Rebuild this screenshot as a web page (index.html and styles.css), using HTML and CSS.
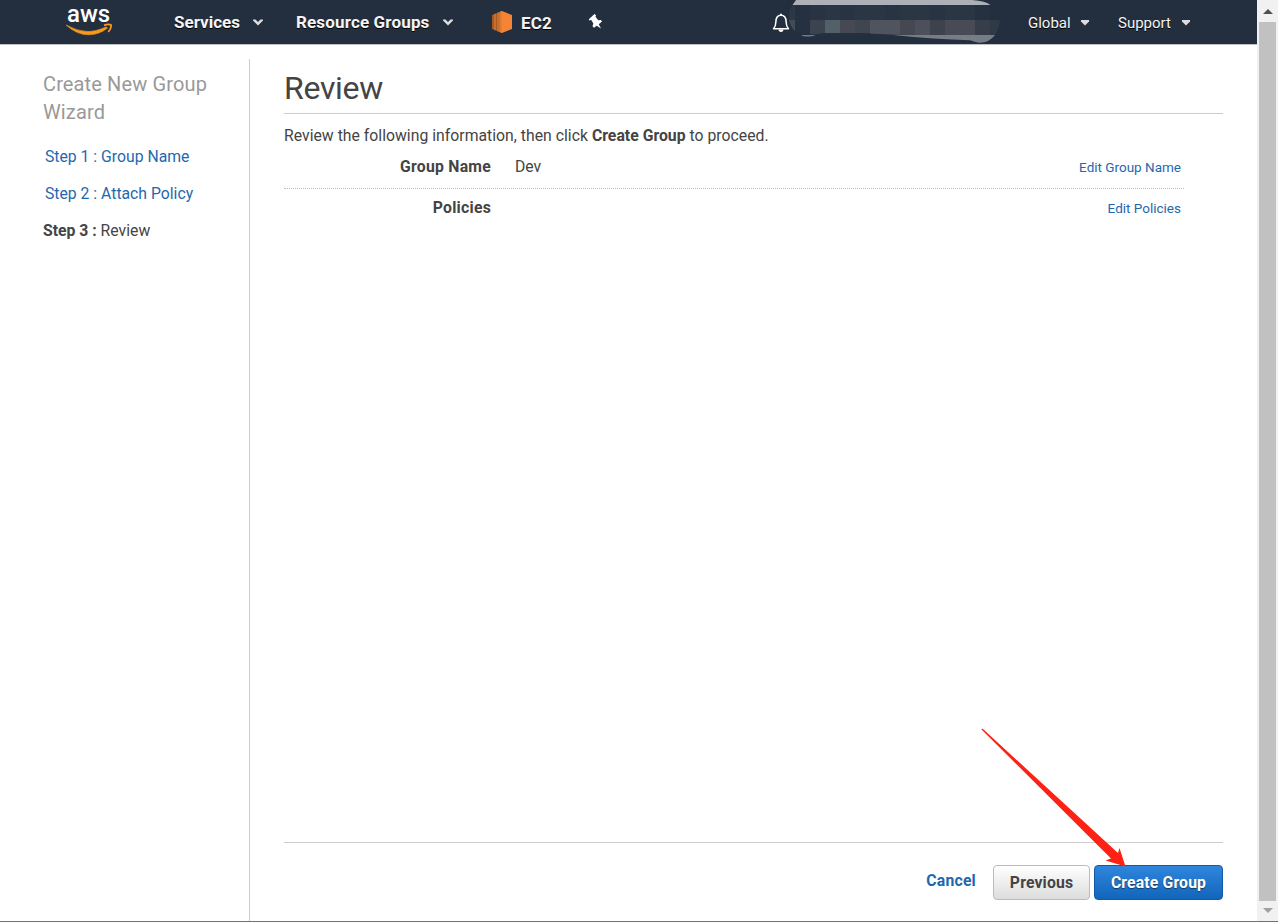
FILE: index.html
```html
<!DOCTYPE html>
<html lang="en">
<head>
<meta charset="utf-8">
<title>Create New Group Wizard</title>
<link rel="stylesheet" href="styles.css">
</head>
<body>
<div class="window">
  <div class="page">
    <header class="nav">
      <a class="logo"><span class="logo-text">aws</span>
        <svg class="smile" width="48" height="13" viewBox="0 0 48 13"><path d="M1 2Q12 12 24 11.800 35 11.300 42.500 5L41 4Q30 8.800 22 8.500 12 8 1 2Z" fill="#f79a1c" stroke="#f79a1c" stroke-width=".6" stroke-linejoin="round"/><path d="M39 2.300Q44 .6 46 2 46.600 5 43.300 9" fill="none" stroke="#f79a1c" stroke-width="1.800"/></svg>
      </a>
      <span class="nav-item services">Services</span>
      <svg class="chev" width="10" height="7" viewBox="0 0 10 7"><path d="M0 .5H2.500L5 3 7.500 .5H10V1.500L5 6.500 0 1.500Z" fill="#ddd"/></svg>
      <span class="nav-item groups">Resource Groups</span>
      <svg class="chev" width="10" height="7" viewBox="0 0 10 7"><path d="M0 .5H2.500L5 3 7.500 .5H10V1.500L5 6.500 0 1.500Z" fill="#ddd"/></svg>
      <svg class="cube" width="20" height="22" viewBox="0 0 20 22"><path d="M0 4 10 0V22L0 18Z" fill="#a65b27"/><path d="M2 3.200 4 2.400V19.600L2 18.800ZM5 2 7 1.200V20.800L5 20Z" fill="#c96f2d"/><path d="M7.500 1 10 0 20 4V18L10 22 7.500 21Z" fill="#f58534"/><path d="M9 1V21" stroke="#c96f2d" stroke-width=".7"/></svg>
      <span class="nav-item ec2">EC2</span>
      <svg class="pin" width="15" height="16" viewBox="0 0 15 16"><path d="M.8 5.200 6.500 0 8 1.200 7.500 2.800 10.300 6.300 13 6 14 7.500 10.800 10.200 13 14.500 8.700 11.700 6 13.800 4.500 12.200 5.300 9.500 3.300 6 1.500 6.500Z" fill="#fff"/></svg>
      <svg class="bell" width="18" height="20" viewBox="0 0 18 20"><path d="M1.500 15.800C3.400 13.800 3.800 12.700 3.900 8.700 4 5.200 5.700 2.300 9 2.300S14 5.200 14.100 8.700C14.200 12.700 14.600 13.800 16.500 15.800Z" fill="none" stroke="#fff" stroke-width="1.500" stroke-linejoin="round"/><path d="M6.300 16.500H11.700Q11 19 9 19T6.300 16.500ZM8 2V.7H10V2Z" fill="#fff"/></svg>
      <svg class="mosaic" width="212" height="44" viewBox="788 0 212 44">
        <path d="M796 0H972Q986 1 990.500 5H792.500Z" fill="#adb0b6"/>
        <path d="M792.500 5H795V31Q789 24 789 15 789 9 792.500 5Z" fill="#2d3846"/>
        <path d="M789 20H795V31Q790.500 27 789 20Z" fill="#414b57"/>
        <path d="M795 5H990V20H1000Q999 30 994.500 35H801L816 33H795Z" fill="#253140"/>
        <path d="M810 5H825V20H810ZM840 5H855V20H840ZM885 5H900V20H885ZM930 5H945V20H930Z" fill="#283443"/>
        <path d="M825 5H840V20H825ZM855 5H885V20H855ZM900 5H930V20H900ZM945 5H975V20H945Z" fill="#2b3644"/>
        <path d="M810 20H825V34H810Z" fill="#3b4350"/><path d="M825 20H840V33H825Z" fill="#52606a"/><path d="M840 20H855V33H840Z" fill="#464853"/><path d="M855 20H870V33H855Z" fill="#40464f"/><path d="M870 20H900V35H870Z" fill="#50545f"/><path d="M900 20H915V35H900Z" fill="#454751"/><path d="M915 20H930V35H915Z" fill="#4c505d"/><path d="M930 20H945V35H930Z" fill="#3d424d"/><path d="M945 20H975V35H945Z" fill="#484b56"/><path d="M975 20H990V35H975Z" fill="#353e49"/><path d="M990 20H1000Q999 30 995 35H990Z" fill="#2f3a46"/>
        <path d="M801 35H816Q810 37 808 36.500 803 36.500 801 35Z" fill="#737a83"/>
        <path d="M816 35Q819 32.800 824 33 860 32.500 902 35Z" fill="#253140"/>
        <path d="M893 35H995Q989 43 979 42.700 975 42 970 40.200 935 39.500 893 35Z" fill="#777d86"/>
      </svg>
      <span class="nav-sub global">Global</span>
      <svg class="tri" width="8" height="6" viewBox="0 0 8 6"><path d="M0 0H8V1.500L4 5.500 0 1.500Z" fill="#ddd"/></svg>
      <span class="nav-sub support">Support</span>
      <svg class="tri" width="8" height="6" viewBox="0 0 8 6"><path d="M0 0H8V1.500L4 5.500 0 1.500Z" fill="#ddd"/></svg>
    </header>
    <div class="body">
      <aside class="side">
        <h2>Create New Group<br>Wizard</h2>
        <a class="step">Step 1 : Group Name</a>
        <a class="step">Step 2 : Attach Policy</a>
        <div class="step current"><b>Step 3 :</b> Review</div>
      </aside>
      <main class="main">
        <h1>Review</h1>
        <p class="intro">Review the following information, then click <b>Create Group</b> to proceed.</p>
        <div class="row"><b class="label">Group Name</b><span class="value">Dev</span><a class="edit">Edit Group Name</a></div>
        <div class="row last"><b class="label">Policies</b><span class="value"></span><a class="edit">Edit Policies</a></div>
        <footer class="actions">
          <a class="cancel">Cancel</a>
          <button class="btn previous">Previous</button>
          <button class="btn create">Create Group</button>
        </footer>
      </main>
    </div>
  </div>
  <div class="scrollbar">
    <svg width="10" height="5" viewBox="0 0 10 5"><path d="M0 5 5 0 10 5Z" fill="#505050"/></svg>
    <div class="thumb"></div>
    <svg width="10" height="5" viewBox="0 0 10 5"><path d="M0 0H10L5 5Z" fill="#a0a0a0"/></svg>
  </div>
</div>
<svg class="arrow" width="150" height="142" viewBox="980 727 150 142"><path d="M981.500 729.500Q982 728.500 983 729L1118 853 1119.500 848 1125.500 866.500 1105.500 860.500 1111 858.500Z" fill="#ff2113"/></svg>
</body>
</html>
```

FILE: styles.css
```css
* { box-sizing: border-box; }
body { margin: 0; height: 922px; overflow: hidden; background: #fff; color: #444; font: 15.75px/20px Roboto, sans-serif; }
svg { display: block; flex: none; }
.window { display: flex; height: 922px; border-bottom: 1px solid #1f86d8; }
.page { width: 1257px; display: flex; flex-direction: column; }
.nav { height: 45px; flex: none; display: flex; align-items: flex-start; background: #232f3e; border-bottom: 1px solid #bfc1c4; color: #f4f4f4; white-space: nowrap; text-shadow: 0 1px 0 #000; }
.nav > * { flex: none; }
.logo { width: 108px; margin-left: 65px; height: 44px; }
.logo-text { display: block; height: 23px; padding-left: 2px; font: 500 24px/28px Roboto, sans-serif; color: #fff; text-shadow: none; }
.nav-item { font-size: 17px; font-weight: 700; padding-top: 12px; letter-spacing: 0.15px; }
.services { width: 80px; letter-spacing: 0; padding-left: 1px; }
.chev { margin-top: 19px; }
.groups { width: 147px; margin-left: 33px; }
.cube { margin: 11px 0 0 39px; }
.ec2 { margin-left: 8px; width: 68px; padding: 13px 0 0 1px; }
.pin { margin-top: 14px; }
.bell { margin: 13px 0 0 169px; }
.mosaic { margin-left: -2px; }
.nav-sub { padding-top: 13px; font-size: 15px; }
.global { width: 53px; margin-left: 28px; }
.tri { margin-top: 20px; }
.support { width: 64px; margin-left: 29px; }
.body { display: flex; flex: 1; padding-top: 14px; }
.side { width: 250px; padding: 11px 0 0 43px; border-right: 1px solid #ccc; }
.side h2 { margin: 0 0 21px; font-size: 20px; line-height: 28px; font-weight: 400; letter-spacing: 0.13px; color: #999; }
.step { display: block; height: 20px; margin: 0 0 17px 2px; }
.step.current { margin-left: 0; color: #444; }
a { color: #1f68ae; }
.main { width: 973px; padding-left: 34px; display: flex; flex-direction: column; }
h1 { margin: 0 0 12px; height: 55px; padding-top: 9px; font-size: 32px; line-height: 40px; font-weight: 400; letter-spacing: -0.3px; border-bottom: 1px solid #ccc; }
.intro { margin: 0 0 11px; letter-spacing: 0.02px; }
.row { width: 900px; height: 32px; display: flex; border-bottom: 1px dotted #bbb; }
.row.last { border: 0; margin-top: 9px; }
.label { width: 207px; text-align: right; letter-spacing: 0.25px; }
.value { margin-left: 24px; flex: 1; }
.edit { font-size: 13.5px; line-height: 21px; margin-right: 3px; }
.actions { margin-top: auto; height: 79px; border-top: 1px solid #ccc; display: flex; justify-content: flex-end; align-items: flex-start; padding-top: 22px; }
.cancel { font-weight: 700; letter-spacing: 0.2px; margin: 6px 17px 0 0; }
.btn { height: 35px; padding: 1px 0 0; border: 1px solid #bbb; border-radius: 4px; font: 700 15.75px/32px Roboto, sans-serif; letter-spacing: 0.15px; }
.previous { width: 97px; margin-right: 4px; color: #444; background: linear-gradient(#fff, #ddd); }
.create { width: 129px; color: #fff; border-color: #1459a4; background: linear-gradient(#2f86dd, #1166bb); text-shadow: 0 1px 1px #123a66; }
.scrollbar { width: 21px; background: #f1f1f1; display: flex; flex-direction: column; align-items: center; padding: 9px 0 8px; }
.thumb { width: 17px; flex: 1; margin: 8px 0 7px; background: #c1c1c1; }
.arrow { position: absolute; left: 980px; top: 727px; }
```
